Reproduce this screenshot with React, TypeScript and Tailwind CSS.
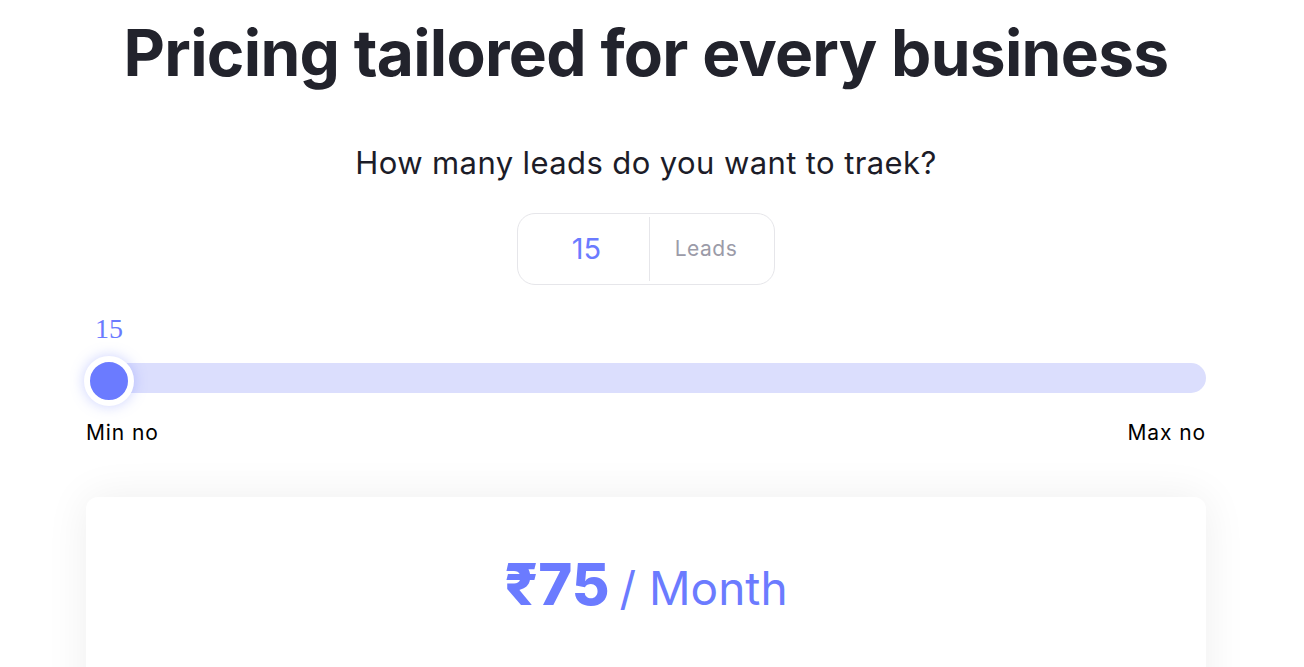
import React from "react";

export default function App() {
  const value = 15;
  return (
    <div className="min-h-screen bg-white pr-[12px]" style={{ fontFamily: "Inter, 'Noto Sans', sans-serif" }}>
      <div className="mx-auto w-[1120px] flex flex-col items-center">
        <h1 className="mt-[13px] text-[64px] leading-[80px] font-bold tracking-[-0.7px] text-[#22232c] whitespace-nowrap">
          Pricing tailored for every business
        </h1>
        <p className="mt-[51px] text-[31px] leading-[38px] tracking-[0.4px] text-[#1c1c28]">How many leads do you want to traek?</p>
        <div className="mt-[31px] flex h-[72px] w-[258px] rounded-[18px] border border-[#e6e6ea]">
          <div className="flex w-[131px] items-center justify-center pl-[6px] text-[29px] text-[#6b7bff]">{value}</div>
          <div className="my-[3px] w-px bg-[#e6e6ea]" />
          <div className="flex flex-1 items-center justify-center pr-[12px] text-[21px] tracking-[0.5px] text-[#9b9ba8]">Leads</div>
        </div>
        <div className="mt-[27px] w-full">
          <div className="h-[34px] pl-[9px] text-[28px] leading-[34px] text-[#6b7bff]" style={{ fontFamily: "'Liberation Serif', serif" }}>
            {value}
          </div>
          <div className="relative mt-[17px] h-[30px] w-full rounded-full bg-[#dbdefd]">
            <div className="absolute left-[-2px] top-[-7px] h-[50px] w-[50px] rounded-full border-[6px] border-white bg-[#6b7bff] shadow-[0_0_14px_rgba(107,123,255,0.35)]" />
          </div>
          <div className="mt-[26px] flex justify-between text-[21px] leading-[28px] tracking-[0.9px] text-black">
            <span>Min no</span>
            <span>Max no</span>
          </div>
        </div>
        <div className="mt-[50px] h-[300px] w-full rounded-[12px] bg-white shadow-[0_0_44px_rgba(0,0,0,0.07)]">
          <div className="flex items-baseline justify-center pt-[47px] text-[#6b7bff]">
            <span className="text-[58px] font-extrabold leading-[80px]">₹75</span>
            <span className="ml-[10px] text-[46px] font-normal leading-[80px]">/ Month</span>
          </div>
        </div>
      </div>
    </div>
  );
}
